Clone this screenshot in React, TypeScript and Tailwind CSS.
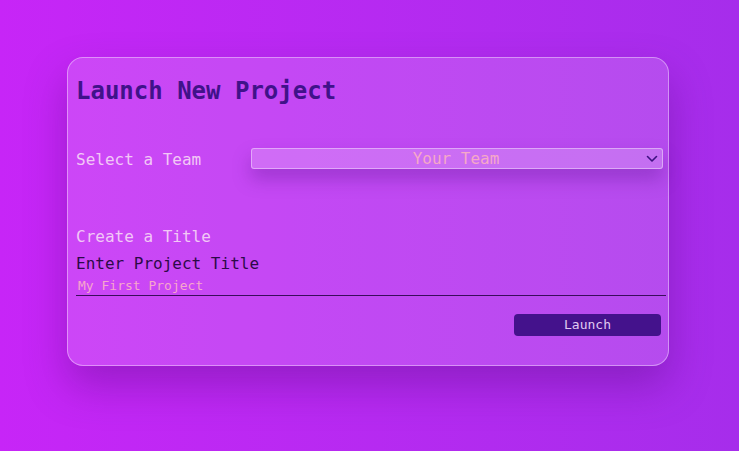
const ChevronDown = () => (
  <svg width="12" height="8" viewBox="0 0 12 8" fill="none" className="shrink-0">
    <path d="M1.5 1.5L6 6L10.5 1.5" stroke="#3d1180" strokeWidth="1.6" strokeLinecap="round" strokeLinejoin="round" />
  </svg>
);

const LaunchCard = () => {
  return (
    <div className="w-[602px] h-[309px] rounded-[16px] border border-white/40 bg-white/15 shadow-[0_20px_40px_rgba(80,10,120,0.35)] pl-2 pr-[2px] pt-[17px] flex flex-col">
      <h1 className="text-[24px] leading-8 font-bold text-[#40128a]">Launch New Project</h1>

      <div className="mt-[39px] flex items-start">
        <span className="w-[175px] pt-[2px] text-[16px] leading-6 text-[#f2c8f6]">Select a Team</span>
        <div className="flex-1 mt-[2px] mr-[3px] h-[21px] rounded-[3px] border border-white/40 bg-white/20 shadow-[0_10px_18px_rgba(90,20,140,0.35)] flex items-center pl-[14px] pr-[4px]">
          <span className="flex-1 text-center text-[16px] leading-5 text-[#f6a8c8]">Your Team</span>
          <ChevronDown />
        </div>
      </div>

      <span className="mt-[53px] text-[16px] leading-6 text-[#f2c8f6]">Create a Title</span>
      <span className="mt-[3px] text-[16px] leading-6 text-[#2c0a48]">Enter Project Title</span>
      <input
        className="h-[20px] w-full bg-transparent border-b border-[#3a0d5c] pl-[2px] text-[13px] leading-4 text-[#2c0a48] placeholder:text-[#f7a6cc] outline-none"
        placeholder="My First Project"
      />

      <div className="mt-[18px] flex justify-end pr-[5px]">
        <button className="w-[147px] h-[22px] rounded-[4px] bg-[#44128c] text-[13px] leading-4 text-[#e0cbf2]">
          Launch
        </button>
      </div>
    </div>
  );
};

export default function App() {
  return (
    <div
      className="min-h-screen w-full bg-gradient-to-r from-[#c725f7] to-[#a62deb] pt-[57px] pl-[67px]"
      style={{ fontFamily: '"DejaVu Sans Mono", "Liberation Mono", monospace' }}
    >
      <LaunchCard />
    </div>
  );
}
